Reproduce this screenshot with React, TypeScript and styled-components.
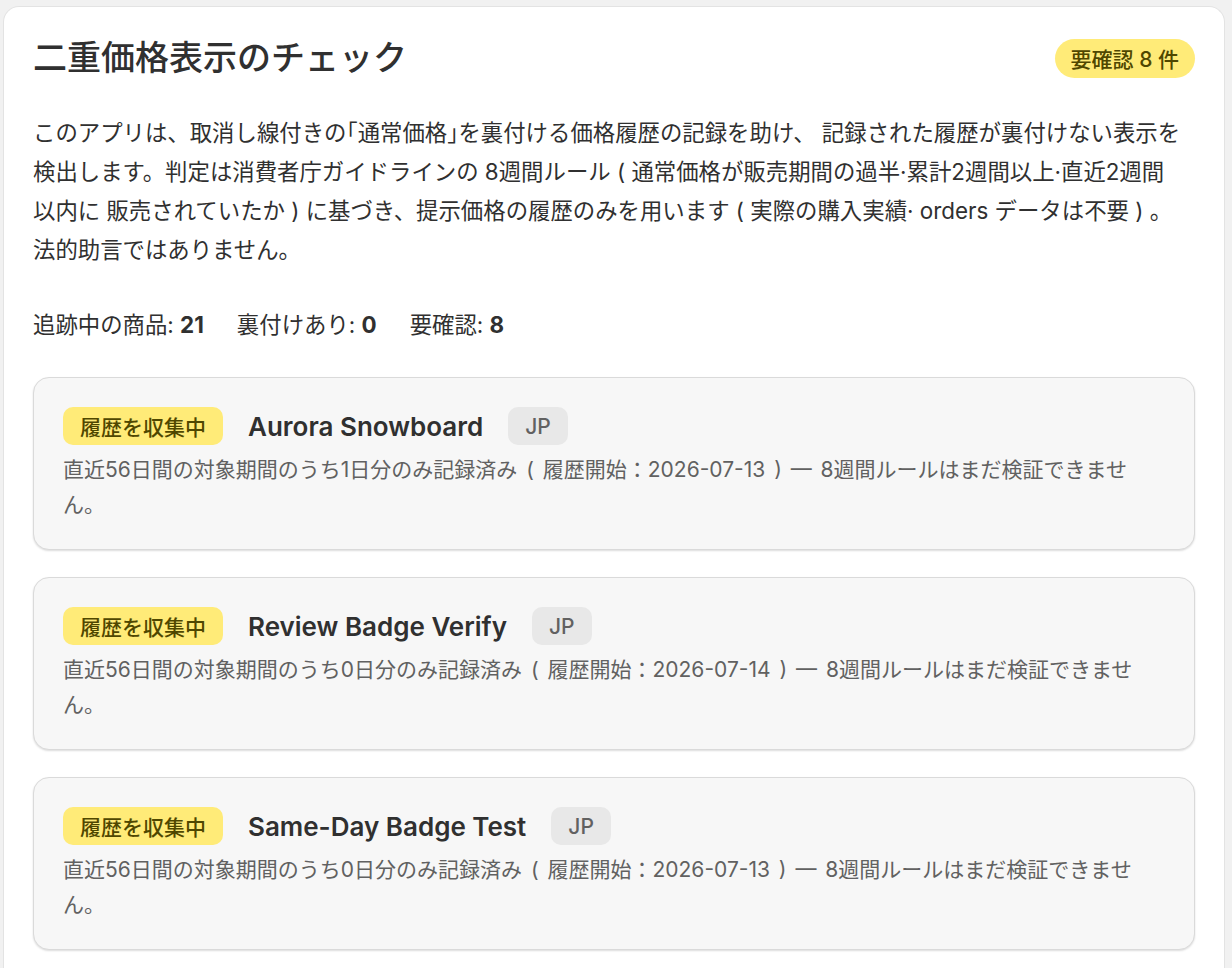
import * as React from "react";
import styled, { createGlobalStyle } from "styled-components";

const GlobalStyle = createGlobalStyle`
  html, body {
    margin: 0;
    background: #f1f1f1;
  }
  body {
    font-family: Inter, "Noto Sans CJK JP", "Noto Sans", sans-serif;
    color: #303030;
    -webkit-font-smoothing: antialiased;
  }
`;

const Page = styled.div`
  padding: 6px 7px 0 3px;
  height: 968px;
  box-sizing: border-box;
  overflow: hidden;
`;

const Panel = styled.section`
  background: #ffffff;
  border: 1px solid #e3e3e3;
  border-bottom: none;
  border-radius: 16px 16px 0 0;
  padding: 31px 29px 40px 29px;
  min-height: 1000px;
  box-sizing: border-box;
`;

const HeaderRow = styled.div`
  display: flex;
  align-items: center;
  justify-content: space-between;
  height: 40px;
`;

const Title = styled.h1`
  margin: 0;
  font-size: 34px;
  line-height: 40px;
  font-weight: 500;
  color: #303030;
`;

const Badge = styled.span<{ $tone?: "attention" | "neutral"; $pill?: boolean }>`
  display: inline-flex;
  align-items: center;
  flex-shrink: 0;
  height: ${(p) => (p.$pill ? "39px" : "38px")};
  padding: 0 ${(p) => (p.$pill ? "16px" : "17px")};
  border-radius: ${(p) => (p.$pill ? "20px" : "10px")};
  font-size: 21px;
  font-weight: 500;
  white-space: nowrap;
  background: ${(p) => (p.$tone === "neutral" ? "#e8e8e8" : "#ffeb78")};
  color: ${(p) => (p.$tone === "neutral" ? "#616161" : "#4f4700")};
`;

const Intro = styled.p`
  margin: 35px 0 0;
  font-size: 22.4px;
  line-height: 39px;
  color: #303030;
`;

const Bracket = styled.span`
  font-feature-settings: "halt";
`;

const Stats = styled.div`
  display: flex;
  gap: 33px;
  margin-top: 41px;
  font-size: 22.4px;
  line-height: 30px;
`;

const Stat = styled.span`
  b {
    font-weight: 700;
  }
`;

const List = styled.div`
  display: flex;
  flex-direction: column;
  gap: 27px;
  margin-top: 37px;
`;

const ItemCard = styled.div`
  background: #f7f7f7;
  border: 1px solid #dadada;
  border-radius: 16px;
  box-shadow: 0 1px 2px rgba(0, 0, 0, 0.14);
  padding: 29px 29px 27px;
`;

const ItemHead = styled.div`
  display: flex;
  align-items: center;
  gap: 25px;
`;

const ItemName = styled.span`
  font-size: 26px;
  font-weight: 600;
  color: #303030;
`;

const ItemNote = styled.p`
  margin: 7px 0 0;
  font-size: 21px;
  line-height: 35px;
  word-spacing: 3px;
  color: #616161;
`;

type Item = { name: string; days: number; start: string };

const items: Item[] = [
  { name: "Aurora Snowboard", days: 1, start: "2026-07-13" },
  { name: "Review Badge Verify", days: 0, start: "2026-07-14" },
  { name: "Same-Day Badge Test", days: 0, start: "2026-07-13" },
];

const noteText = (it: Item) =>
  `直近56日間の対象期間のうち${it.days}日分のみ記録済み ( 履歴開始：${it.start} ) — 8週間ルールはまだ検証できません。`;

export default function App() {
  return (
    <>
      <GlobalStyle />
      <Page>
        <Panel>
          <HeaderRow>
            <Title>二重価格表示のチェック</Title>
            <Badge $pill>要確認 8 件</Badge>
          </HeaderRow>
          <Intro>
            このアプリは、取消し線付きの<Bracket>「</Bracket>通常価格<Bracket>」</Bracket>を裏付ける価格履歴の記録を助け、 記録された履歴が裏付けない表示を
            <br />
            検出します。判定は消費者庁ガイドラインの 8週間ルール ( 通常価格が販売期間の過半·累計2週間以上·直近2週間
            <br />
            以内に 販売されていたか ) に基づき、提示価格の履歴のみを用います ( 実際の購入実績· orders データは不要 ) 。
            <br />
            法的助言ではありません。
          </Intro>
          <Stats>
            <Stat>
              追跡中の商品: <b>21</b>
            </Stat>
            <Stat>
              裏付けあり: <b>0</b>
            </Stat>
            <Stat>
              要確認: <b>8</b>
            </Stat>
          </Stats>
          <List>
            {items.map((it) => (
              <ItemCard key={it.name}>
                <ItemHead>
                  <Badge>履歴を収集中</Badge>
                  <ItemName>{it.name}</ItemName>
                  <Badge $tone="neutral">JP</Badge>
                </ItemHead>
                <ItemNote>{noteText(it)}</ItemNote>
              </ItemCard>
            ))}
          </List>
        </Panel>
      </Page>
    </>
  );
}
